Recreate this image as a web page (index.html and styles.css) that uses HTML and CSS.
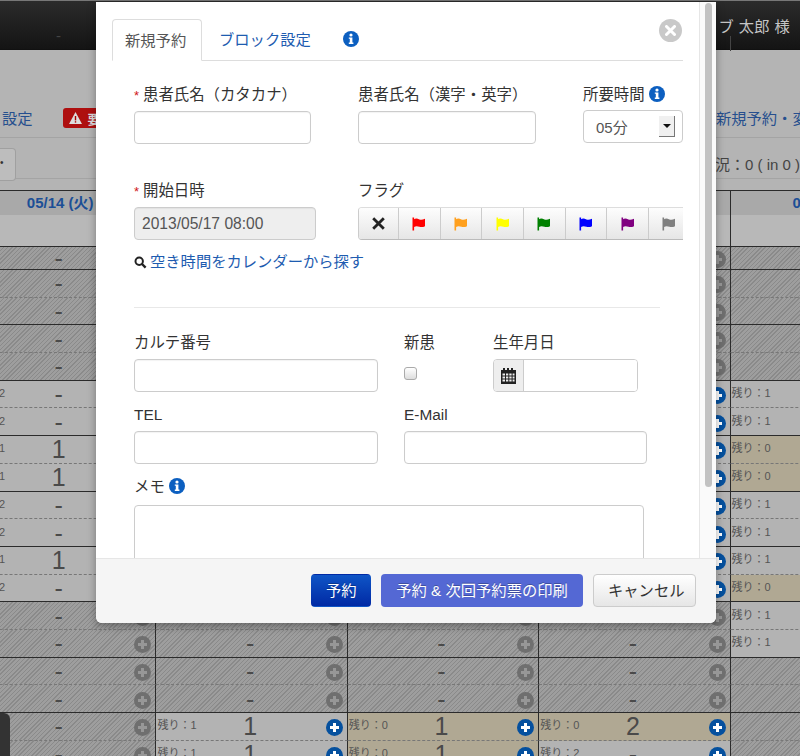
FILE: index.html
```html
<!DOCTYPE html>
<html lang="ja">
<head>
    <meta charset="UTF-8">
    <title>新規予約</title>
    <link rel="stylesheet" href="styles.css">
</head>
<body>
    <svg class="defs" width="0" height="0">
        <symbol id="flag" viewBox="0 0 14 14">
            <rect x="0.5" y="0.5" width="1.6" height="13"/>
            <path d="M2 2.2c2-1.2 3.6-.4 5.4.2 2 .6 3.4.2 5.6-.6v7.4c-2 1-3.6 1.2-5.6.5-1.9-.6-3.4-.9-5.4.2z"/>
        </symbol>
        <symbol id="info" viewBox="0 0 16 16">
            <circle cx="8" cy="8" r="8" fill="#0c5fc0"/>
            <circle cx="8" cy="4" r="1.6" fill="#fff"/>
            <path d="M5.8 6.4h3.6v5.2h1v1.4H5.8v-1.4h1v-3.8h-1z" fill="#fff"/>
        </symbol>
    </svg>

    <header class="top-bar">
        <span class="top-dash">-</span>
        <span class="user-name">ブ 太郎 様</span>
    </header>

    <nav class="sub-nav">
        <a class="sub-link">設定</a>
        <span class="alert-badge">
            <svg width="13" height="12" viewBox="0 0 13 12"><path d="M6.5 0 13 12H0z" fill="#ddd"/><rect x="5.8" y="4" width="1.4" height="4.4" fill="#a00"/><rect x="5.8" y="9.2" width="1.4" height="1.4" fill="#a00"/></svg>
            要
        </span>
        <a class="sub-link sub-link-right">新規予約・変更</a>
    </nav>

    <div class="tool-row">
        <span class="tool-btn">•</span>
        <span class="status-count">状況：0 ( in 0 )</span>
    </div>

    <div class="schedule">
        <div class="day-head"><b>05/14 (火)</b></div><div class="day-head"></div><div class="day-head"></div><div class="day-head"></div><div class="day-head"><b>05/18 (土)</b></div>
        <div class="day-sub"></div><div class="day-sub"></div><div class="day-sub"></div><div class="day-sub"></div><div class="day-sub"></div>

        <div class="slot hatch end"><span></span><span class="num">-</span></div><div class="slot hatch end"></div><div class="slot hatch end"></div><div class="slot hatch end"><i class="plus"></i></div><div class="slot hatch end"></div>

        <div class="slot hatch"><span></span><span class="num">-</span></div><div class="slot hatch"></div><div class="slot hatch"></div><div class="slot hatch"><i class="plus"></i></div><div class="slot hatch"></div>
        <div class="slot hatch end"><span></span><span class="num">-</span></div><div class="slot hatch end"></div><div class="slot hatch end"></div><div class="slot hatch end"><i class="plus"></i></div><div class="slot hatch end"></div>
        <div class="slot hatch"><span></span><span class="num">-</span></div><div class="slot hatch"></div><div class="slot hatch"></div><div class="slot hatch"><i class="plus"></i></div><div class="slot hatch"></div>
        <div class="slot hatch end"><span></span><span class="num">-</span></div><div class="slot hatch end"></div><div class="slot hatch end"></div><div class="slot hatch end"><i class="plus"></i></div><div class="slot hatch end"></div>

        <div class="slot"><span class="rem">残り：2</span><span class="num">-</span></div><div class="slot"></div><div class="slot"></div><div class="slot"><i class="plus on"></i></div><div class="slot"><span class="rem">残り：1</span></div>
        <div class="slot end"><span class="rem">残り：2</span><span class="num">-</span></div><div class="slot end"></div><div class="slot end"></div><div class="slot end"><i class="plus on"></i></div><div class="slot end"><span class="rem">残り：1</span></div>
        <div class="slot"><span class="rem">残り：1</span><span class="num">1</span></div><div class="slot"></div><div class="slot"></div><div class="slot"><i class="plus on"></i></div><div class="slot tan"><span class="rem">残り：0</span></div>
        <div class="slot end"><span class="rem">残り：1</span><span class="num">1</span></div><div class="slot end"></div><div class="slot end"></div><div class="slot end"><i class="plus on"></i></div><div class="slot tan end"><span class="rem">残り：0</span></div>
        <div class="slot"><span class="rem">残り：2</span><span class="num">-</span></div><div class="slot"></div><div class="slot"></div><div class="slot"><i class="plus on"></i></div><div class="slot"><span class="rem">残り：1</span></div>
        <div class="slot end"><span class="rem">残り：2</span><span class="num">-</span></div><div class="slot end"></div><div class="slot end"></div><div class="slot end"><i class="plus on"></i></div><div class="slot end"><span class="rem">残り：1</span></div>
        <div class="slot"><span class="rem">残り：1</span><span class="num">1</span></div><div class="slot"></div><div class="slot"></div><div class="slot"><i class="plus on"></i></div><div class="slot"><span class="rem">残り：1</span></div>
        <div class="slot end"><span class="rem">残り：2</span><span class="num">-</span></div><div class="slot end"></div><div class="slot end"></div><div class="slot end"><i class="plus on"></i></div><div class="slot tan end"><span class="rem">残り：0</span></div>

        <div class="slot hatch"><span></span><span class="num">-</span><i class="plus"></i></div><div class="slot hatch"><span></span><span class="num">-</span><i class="plus"></i></div><div class="slot hatch"><span></span><span class="num">-</span><i class="plus"></i></div><div class="slot hatch"><span></span><span class="num">-</span><i class="plus"></i></div><div class="slot"><span class="rem">残り：1</span></div>
        <div class="slot hatch end"><span></span><span class="num">-</span><i class="plus"></i></div><div class="slot hatch end"><span></span><span class="num">-</span><i class="plus"></i></div><div class="slot hatch end"><span></span><span class="num">-</span><i class="plus"></i></div><div class="slot hatch end"><span></span><span class="num">-</span><i class="plus"></i></div><div class="slot end"><span class="rem">残り：1</span></div>
        <div class="slot hatch"><span></span><span class="num">-</span><i class="plus"></i></div><div class="slot hatch"><span></span><span class="num">-</span><i class="plus"></i></div><div class="slot hatch"><span></span><span class="num">-</span><i class="plus"></i></div><div class="slot hatch"><span></span><span class="num">-</span><i class="plus"></i></div><div class="slot hatch"></div>
        <div class="slot hatch end"><span></span><span class="num">-</span><i class="plus"></i></div><div class="slot hatch end"><span></span><span class="num">-</span><i class="plus"></i></div><div class="slot hatch end"><span></span><span class="num">-</span><i class="plus"></i></div><div class="slot hatch end"><span></span><span class="num">-</span><i class="plus"></i></div><div class="slot hatch end"></div>

        <div class="slot hatch"><span></span><span class="num">-</span><i class="plus"></i></div><div class="slot"><span class="rem">残り：1</span><span class="num">1</span><i class="plus on"></i></div><div class="slot tan"><span class="rem">残り：0</span><span class="num">1</span><i class="plus on"></i></div><div class="slot tan"><span class="rem">残り：0</span><span class="num">2</span><i class="plus on"></i></div><div class="slot hatch"></div>
        <div class="slot hatch end"><span></span><span class="num">-</span><i class="plus"></i></div><div class="slot end"><span class="rem">残り：1</span><span class="num">1</span><i class="plus on"></i></div><div class="slot tan end"><span class="rem">残り：0</span><span class="num">1</span><i class="plus on"></i></div><div class="slot end"><span class="rem">残り：2</span><span class="num">-</span><i class="plus on"></i></div><div class="slot hatch end"></div>
    </div>

    <div class="side-tab"></div>

    <div class="modal">
        <div class="modal-main">
            <div class="modal-body">
                <span class="close-btn">
                    <svg width="11" height="11" viewBox="0 0 11 11"><path d="M1.5 1.5l8 8M9.5 1.5l-8 8" stroke="#fff" stroke-width="3" stroke-linecap="round"/></svg>
                </span>
                <ul class="tabs">
                    <li class="tab active">新規予約</li>
                    <li class="tab">ブロック設定</li>
                    <li class="tab tab-info"><svg width="16" height="16"><use href="#info"/></svg></li>
                </ul>

                <div class="form-area">
                    <div class="row row-top">
                        <div class="field">
                            <label><span class="req">*</span>患者氏名（カタカナ）</label>
                            <input class="text-input w-177" type="text">
                        </div>
                        <div class="field">
                            <label>患者氏名（漢字・英字）</label>
                            <input class="text-input w-178" type="text">
                        </div>
                        <div class="field field-time">
                            <label>所要時間 <svg class="info-icon" width="16" height="16"><use href="#info"/></svg></label>
                            <div class="select-box">
                                <span>05分</span>
                                <span class="select-arrow"></span>
                            </div>
                        </div>
                    </div>

                    <div class="row row-top row-date">
                        <div class="field">
                            <label><span class="req">*</span>開始日時</label>
                            <input class="text-input w-182 readonly" type="text" value="2013/05/17 08:00" readonly>
                        </div>
                        <div class="field flag-field">
                            <label>フラグ</label>
                            <div class="flag-group">
                                <span class="flag-btn flag-none">
                                    <svg width="13" height="13" viewBox="0 0 13 13"><path d="M1.200 1.200l10.600 10.600M11.800 1.200l-10.600 10.600" stroke="#222" stroke-width="2.800"/></svg>
                                </span>
                                <span class="flag-btn flag-red"><svg width="14" height="14"><use href="#flag"/></svg></span>
                                <span class="flag-btn flag-orange"><svg width="14" height="14"><use href="#flag"/></svg></span>
                                <span class="flag-btn flag-yellow"><svg width="14" height="14"><use href="#flag"/></svg></span>
                                <span class="flag-btn flag-green"><svg width="14" height="14"><use href="#flag"/></svg></span>
                                <span class="flag-btn flag-blue"><svg width="14" height="14"><use href="#flag"/></svg></span>
                                <span class="flag-btn flag-purple"><svg width="14" height="14"><use href="#flag"/></svg></span>
                                <span class="flag-btn flag-gray"><svg width="14" height="14"><use href="#flag"/></svg></span>
                            </div>
                        </div>
                    </div>

                    <a class="calendar-link">
                        <svg width="13" height="13" viewBox="0 0 13 13"><circle cx="5.200" cy="5.200" r="3.700" fill="none" stroke="#222" stroke-width="2"/><path d="M8 8l3.600 3.600" stroke="#222" stroke-width="2.400"/></svg>
                        空き時間をカレンダーから探す
                    </a>

                    <hr class="divider">

                    <div class="row row-chart">
                        <div class="field">
                            <label>カルテ番号</label>
                            <input class="text-input w-244" type="text">
                        </div>
                        <div class="field">
                            <label>新患</label>
                            <input class="check" type="checkbox">
                        </div>
                        <div class="field">
                            <label>生年月日</label>
                            <div class="date-group">
                                <span class="date-addon">
                                    <svg width="17" height="17" viewBox="0 0 17 17"><path d="M1 3h2V1h2v2h2V1h2v2h2V1h2v2h3v14H1z" fill="#222"/><path d="M2.500 6.500h2.500v2h-2.500zM6 6.500h2.300v2H6zM9.300 6.500h2.300v2H9.300zM12.600 6.500h1.900v2h-1.900zM2.500 9.500h2.500v2h-2.500zM6 9.500h2.300v2H6zM9.300 9.500h2.300v2H9.300zM12.600 9.500h1.900v2h-1.900zM2.500 12.500h2.500v2h-2.500zM6 12.500h2.300v2H6zM9.300 12.500h2.300v2H9.300zM12.600 12.500h1.900v2h-1.900z" fill="#eee"/></svg>
                                </span>
                                <input class="date-input" type="text">
                            </div>
                        </div>
                    </div>

                    <div class="row row-contact">
                        <div class="field">
                            <label>TEL</label>
                            <input class="text-input w-244" type="text">
                        </div>
                        <div class="field">
                            <label>E-Mail</label>
                            <input class="text-input w-243" type="text">
                        </div>
                    </div>

                    <div class="field memo-field">
                        <label>メモ <svg class="info-icon" width="16" height="16"><use href="#info"/></svg></label>
                        <textarea class="memo"></textarea>
                    </div>
                </div>
            </div>
            <div class="scroll-rail"><div class="scroll-thumb"></div></div>
        </div>

        <div class="modal-footer">
            <button class="btn btn-primary">予約</button>
            <button class="btn btn-print">予約 &amp; 次回予約票の印刷</button>
            <button class="btn btn-cancel">キャンセル</button>
        </div>
    </div>
</body>
</html>
```

FILE: styles.css
```css
* {
    margin: 0;
    padding: 0;
    box-sizing: border-box;
}

html, body {
    height: 100%;
    overflow: hidden;
}

body {
    position: relative;
    font-family: "Liberation Sans", "Noto Sans CJK JP", sans-serif;
    font-size: 15px;
    color: #333;
    background: #b4b4b4;
}

.defs {
    position: absolute;
}

/* 背景（予約表） */
.top-bar {
    position: relative;
    height: 50px;
    display: flex;
    align-items: center;
    justify-content: space-between;
    padding-left: 56px;
    padding-right: 10px;
    background: linear-gradient(#2b2b2b, #141414);
    border-top: 1px solid #777;
    border-bottom: 1px solid #111;
    color: #c4c4c4;
}

.top-bar::after {
    content: "";
    position: absolute;
    left: 730px;
    top: 35px;
    width: 1px;
    height: 15px;
    background: #444;
}

.top-dash {
    color: #444;
    margin-top: 20px;
}

.user-name {
    font-size: 15.3px;
    letter-spacing: 0.3px;
}

.sub-nav {
    height: 88px;
    display: flex;
    align-items: flex-end;
    padding: 0 0 9px 2px;
    border-bottom: 1px solid #a4a4a4;
    white-space: nowrap;
}

.sub-link {
    color: #264f8e;
    font-size: 15.3px;
}

.alert-badge {
    display: flex;
    align-items: center;
    gap: 6px;
    height: 20px;
    margin-left: 30px;
    padding: 0 6px;
    background: #ae0f0f;
    border-radius: 3px;
    color: #ddd;
    font-size: 13px;
    font-weight: bold;
}

.sub-link-right {
    margin-left: auto;
    margin-right: -23px;
}

.tool-row {
    height: 41px;
    display: flex;
    justify-content: space-between;
    align-items: flex-start;
    border-bottom: 1px solid #a4a4a4;
    white-space: nowrap;
}

.tool-btn {
    width: 16px;
    height: 33px;
    margin-top: 10px;
    padding-top: 8px;
    background: #bdbdbd;
    border: 1px solid #a0a0a0;
    border-left: 0;
    border-radius: 0 4px 4px 0;
    color: #333;
    font-size: 10px;
}

.status-count {
    margin-top: 15px;
    font-size: 15px;
    color: #444;
}

.schedule {
    display: grid;
    grid-template-columns: repeat(5, 191.4px);
    grid-template-rows: 24px 32px 23px;
    grid-auto-rows: 27.7px;
    width: 957px;
    margin: 11px 0 0 -35px;
    border-top: 1px solid #2b2b2b;
}

.day-head {
    display: flex;
    align-items: center;
    justify-content: center;
    background: #a9a9a9;
    border-right: 1px solid #2b2b2b;
    color: #1c4f96;
    font-size: 15px;
    line-height: 20px;
    white-space: nowrap;
}

.day-sub {
    background: #b8b8b8;
    border-right: 1px solid #2b2b2b;
    border-bottom: 1px solid #2b2b2b;
}

.slot {
    display: grid;
    grid-template-columns: 1fr auto 1fr;
    align-items: center;
    background: #b3b3b3;
    border-right: 1px solid #2b2b2b;
    border-bottom: 1px dashed #777;
    padding: 0 4px 0 1px;
    overflow: hidden;
}

.slot.end {
    border-bottom: 1px solid #2b2b2b;
}

.slot.tan {
    background: #b0a893;
}

.slot.hatch {
    background: repeating-linear-gradient(135deg, #8a8a8a 0 1px, #9e9e9e 1px 3px);
}

.rem {
    margin-bottom: 4px;
    font-size: 11px;
    color: #555;
    white-space: nowrap;
}

.num {
    font-size: 25px;
    line-height: 20px;
    color: #4a4a4a;
}

.plus {
    position: relative;
    justify-self: end;
    grid-column: 3;
    width: 17px;
    height: 17px;
    margin-top: 3px;
    border-radius: 50%;
    background: #6f6f6f;
}

.plus.on {
    background: #05509e;
}

.plus::before,
.plus::after {
    content: "";
    position: absolute;
    background: #979797;
}

.plus.on::before,
.plus.on::after {
    background: #fff;
}

.plus::before {
    left: 4px;
    top: 7px;
    width: 9px;
    height: 3px;
}

.plus::after {
    left: 7px;
    top: 4px;
    width: 3px;
    height: 9px;
}

.side-tab {
    position: absolute;
    left: 0;
    top: 713px;
    width: 10px;
    height: 43px;
    background: #333;
    border-radius: 0 6px 0 0;
}

/* モーダル */
.modal {
    position: absolute;
    left: 96px;
    top: 2px;
    width: 620px;
    height: 621px;
    display: flex;
    flex-direction: column;
    background: #fff;
    border-radius: 0 0 6px 6px;
    box-shadow: 0 3px 8px rgba(0, 0, 0, 0.35);
    overflow: hidden;
}

.modal-main {
    flex: 1;
    min-height: 0;
    display: flex;
}

.modal-body {
    position: relative;
    flex: 1;
    min-width: 0;
    overflow: hidden;
    padding: 17px 16px 19px;
}

.scroll-rail {
    flex: none;
    width: 17px;
    padding: 1px 4px 0 5px;
    background: #fafafa;
    border-left: 1px solid #e6e6e6;
}

.scroll-thumb {
    height: 484px;
    background: #c2c2c2;
    border-radius: 5px;
}

.close-btn {
    position: absolute;
    left: 563px;
    top: 17px;
    width: 23px;
    height: 23px;
    display: flex;
    align-items: center;
    justify-content: center;
    background: #c9c9c9;
    border-radius: 50%;
}

.tabs {
    list-style: none;
    display: flex;
    height: 42px;
    border-bottom: 1px solid #ddd;
}

.tab {
    height: 42px;
    padding: 11px 8px 0 17px;
    color: #1e5cb0;
    font-size: 15.3px;
    line-height: 20px;
    white-space: nowrap;
}

.tab.active {
    width: 90px;
    padding: 11px 0 0 12px;
    background: #fff;
    border: 1px solid #ddd;
    border-bottom-color: #fff;
    border-radius: 4px 4px 0 0;
    color: #555;
}

.tab-info {
    padding: 12px 0 0 24px;
}

.form-area {
    padding: 23px 0 0 22px;
}

.row {
    display: grid;
}

.row-top {
    grid-template-columns: 224px 225px 100px;
}

.row-date {
    margin-top: 36px;
}

.row-chart {
    grid-template-columns: 270px 89px 150px;
    margin-top: 24px;
}

.row-contact {
    grid-template-columns: 270px 243px;
    margin-top: 12px;
}

.field label {
    display: block;
    height: 20px;
    margin-bottom: 7px;
    font-size: 15.4px;
    line-height: 22px;
    color: #333;
    white-space: nowrap;
}

.req {
    display: inline-block;
    width: 9px;
    color: #d01818;
    font-size: 13px;
}

.info-icon {
    vertical-align: -2px;
}

.field-time label {
    margin-bottom: 6px;
}

.text-input {
    display: block;
    height: 33px;
    padding: 0 7px;
    border: 1px solid #ccc;
    border-radius: 4px;
    background: #fff;
    box-shadow: inset 0 1px 1px rgba(0, 0, 0, 0.05);
    font-family: inherit;
    font-size: 15.6px;
    color: #555;
}

.w-177 { width: 177px; }
.w-178 { width: 178px; }
.w-182 { width: 182px; }
.w-244 { width: 244px; }
.w-243 { width: 243px; }

.readonly {
    background: #eee;
}

.select-box {
    width: 100px;
    height: 33px;
    display: flex;
    align-items: center;
    justify-content: space-between;
    padding: 0 7px 0 12px;
    border: 1px solid #ccc;
    border-radius: 4px;
    font-size: 15px;
    color: #555;
}

.select-arrow {
    position: relative;
    width: 16px;
    height: 21px;
    background: #f0f0f0;
    border-right: 1px solid #777;
    border-bottom: 1px solid #777;
}

.select-arrow::after {
    content: "";
    position: absolute;
    left: 4px;
    top: 8px;
    border: 4px solid transparent;
    border-top: 4px solid #111;
}

.flag-group {
    display: flex;
    width: 325px;
    height: 33px;
    overflow: hidden;
    border-top: 1px solid #ddd;
    border-bottom: 1px solid #bbb;
    border-left: 1px solid #ccc;
    border-radius: 4px 0 0 4px;
}

.flag-btn {
    flex: none;
    width: 41.7px;
    display: flex;
    align-items: center;
    justify-content: center;
    background: linear-gradient(#fdfdfd, #e6e6e6);
    border-right: 1px solid #ccc;
}

.flag-none {
    width: 40px;
}

.flag-btn svg {
    fill: currentColor;
}

.flag-red { color: #f00; }
.flag-orange { color: #ffa01e; }
.flag-yellow { color: #ff0; }
.flag-green { color: #008000; }
.flag-blue { color: #00f; }
.flag-purple { color: #800080; }
.flag-gray { color: #808080; }

.calendar-link {
    display: flex;
    align-items: center;
    gap: 3px;
    height: 20px;
    margin-top: 12px;
    color: #1e5cb0;
    font-size: 15.3px;
    line-height: 18px;
    white-space: nowrap;
}

.divider {
    width: 526px;
    margin-top: 35px;
    border: 0;
    border-top: 1px solid #e8e8e8;
}

.check {
    appearance: none;
    display: block;
    width: 13px;
    height: 13px;
    margin-top: 15px;
    border: 1px solid #aaa;
    border-radius: 3px;
    background: linear-gradient(#fff, #ddd);
}

.date-group {
    display: flex;
    width: 145px;
    height: 33px;
    border: 1px solid #ccc;
    border-radius: 4px;
    overflow: hidden;
}

.date-addon {
    width: 30px;
    display: flex;
    align-items: center;
    justify-content: center;
    background: #eee;
    border-right: 1px solid #ccc;
}

.date-input {
    flex: 1;
    min-width: 0;
    border: 0;
}

.memo-field {
    margin-top: 12px;
}

.memo-field label {
    margin-bottom: 9px;
}

.memo {
    display: block;
    width: 510px;
    height: 115px;
    border: 1px solid #ccc;
    border-radius: 4px;
    resize: none;
}

.modal-footer {
    flex: none;
    height: 65px;
    display: flex;
    justify-content: flex-end;
    gap: 10px;
    padding: 15px 20px 0 0;
    background: #f5f5f5;
    border-top: 1px solid #e6e6e6;
}

.btn {
    height: 33px;
    padding: 0 14px 3px;
    border: 1px solid transparent;
    border-radius: 4px;
    font-family: inherit;
    font-size: 15.3px;
    white-space: nowrap;
}

.btn-primary {
    width: 60px;
    background: linear-gradient(#0f55c6, #0029a4);
    color: #fff;
    text-shadow: 0 -1px 0 rgba(0, 0, 0, 0.25);
}

.btn-print {
    width: 202px;
    background: #5468d4;
    color: #fff;
    text-shadow: 0 -1px 0 rgba(0, 0, 0, 0.25);
}

.btn-cancel {
    width: 103px;
    background: linear-gradient(#fff, #e6e6e6);
    border-color: #ccc;
    color: #333;
}
```
